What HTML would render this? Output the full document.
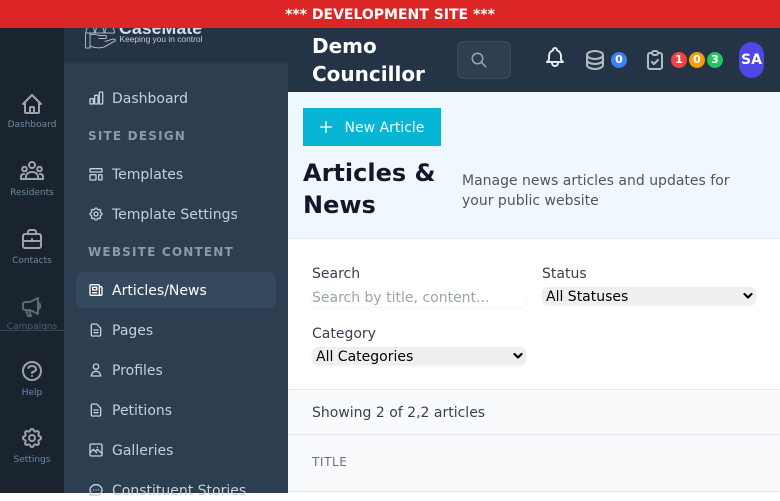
<!DOCTYPE html>
<html><head><meta charset="utf-8">
<style>
*{box-sizing:border-box;margin:0;padding:0}
html,body{width:780px;height:493px;overflow:hidden;background:#fff;font-family:"DejaVu Sans",sans-serif}
.a{position:absolute;white-space:nowrap}
svg{position:absolute;fill:none;stroke-linecap:round;stroke-linejoin:round}
.rl{position:absolute;left:0;width:64px;text-align:center;font-size:9px;line-height:12px;color:#6f87a1}
.ri{stroke:#9ca3af;stroke-width:2;width:24px;height:24px;left:20px}
.n{position:absolute;left:112px;font-size:14px;line-height:20px;color:#c6d0db;white-space:nowrap}
.ni{stroke:#c6d0db;stroke-width:2;width:16px;height:16px;left:88px}
.h{position:absolute;left:88px;font-size:12px;font-weight:700;letter-spacing:1.2px;color:#8a9aab;line-height:16px;white-space:nowrap}
.b{position:absolute;top:52px;width:16px;height:16px;border-radius:50%;color:#fff;font-size:11px;font-weight:700;line-height:16px;text-align:center}
.lab{position:absolute;font-size:14px;line-height:20px;color:#374151;white-space:nowrap}
.sel{position:absolute;height:18px;width:214px;background:#efefef;border-radius:6px;font-size:14px;line-height:20px;color:#000;padding-left:4px;box-shadow:0 1px 2px rgba(0,0,0,.05)}
.sel svg{right:3px;top:5px;width:10px;height:8px;stroke:#000;stroke-width:2.2}
</style></head><body>
<div class="a" style="left:0;top:28px;width:64px;height:465px;background:#1a242f"></div>
<div class="a" style="left:64px;top:28px;width:224px;height:465px;background:#2c3e50"></div>
<div class="a" style="left:64px;top:28px;width:224px;height:36px;background:#243345;border-bottom:1px solid #2a3a4c"></div>
<div class="a" style="left:288px;top:28px;width:492px;height:64px;background:#243345"></div>
<div class="a" style="left:288px;top:92px;width:492px;height:147px;background:#f0f8ff;border-bottom:1px solid #e5e7eb"></div>
<div class="a" style="left:288px;top:389px;width:492px;height:104px;background:#f9fafb"></div>
<div class="a" style="left:288px;top:389px;width:492px;height:1px;background:#e5e7eb"></div>
<div class="a" style="left:288px;top:434px;width:492px;height:1px;background:#e5e7eb"></div>
<div class="a" style="left:288px;top:491px;width:492px;height:1px;background:#e5e7eb"></div>

<!-- logo -->
<div class="a" style="left:119px;top:17px;font:700 17.800px/22px 'Liberation Sans',sans-serif;color:#d7dce2">CaseMate</div>
<div class="a" style="left:119.500px;top:33px;font:8.400px/12px 'Liberation Sans',sans-serif;color:#c4ccd5">Keeping you in control</div>
<svg style="left:85px;top:22px;width:32px;height:27px;stroke:#aeb6bf;stroke-width:1" viewBox="0 0 32 27"><path d="M.500 26V11h4.500v15zM5 13c4-1 6-1 9 .5h6c2 0 2 3 0 3h-6M5 24c6 2.500 10 2 14 1l11-6c1-1 0-2-2-2l-8 2.500M1 11c0-6 2.500-7 4.500-7s4 2 4 7zM10.500 11c0-6 2.500-7 4.500-7s4 2 4 7zM20 11c0-6 2.500-7 4.500-7s5 2 5 7z"/></svg>

<!-- banner -->
<div class="a" style="left:0;top:0;width:780px;height:28px;background:#dc2626;color:#fff;font-size:14px;font-weight:700;line-height:28px;text-align:center;padding-top:1px">*** DEVELOPMENT SITE ***</div>

<!-- rail -->
<svg class="ri" style="top:92px" viewBox="0 0 24 24"><path d="M3 12l2-2m0 0l7-7 7 7M5 10v10a1 1 0 001 1h3m10-11l2 2m-2-2v10a1 1 0 01-1 1h-3m-6 0a1 1 0 001-1v-4a1 1 0 011-1h2a1 1 0 011 1v4a1 1 0 001 1m-6 0h6"/></svg>
<div class="rl" style="top:119px">Dashboard</div>
<svg class="ri" style="top:160px" viewBox="0 0 24 24"><circle cx="12" cy="5" r="3"/><circle cx="4.500" cy="9" r="2.300"/><circle cx="19.500" cy="9" r="2.300"/><path d="M1 19v-2c0-2 1-3 3-3M23 19v-2c0-2-1-3-3-3M6 19v-2c0-3 2-5 6-5s6 2 6 5v2zM1 19h22"/></svg>
<div class="rl" style="top:187px">Residents</div>
<svg class="ri" style="top:227px" viewBox="0 0 24 24"><rect x="3" y="7" width="18" height="14" rx="2"/><path d="M8 7V5a2 2 0 012-2h4a2 2 0 012 2v2M3 14h18M12 12v.5"/></svg>
<div class="rl" style="top:255px">Contacts</div>
<svg class="ri" style="top:295px;stroke:#5d6873" viewBox="0 0 24 24"><path d="M3 9a2 2 0 012-2h5l8-4v16l-8-4H5a2 2 0 01-2-2zM6 15l2 6h3l-2-6M18 8c3 0 3 6 0 6"/></svg>
<div class="rl" style="top:321px;color:#4d5e70">Campaigns</div>
<div class="a" style="left:0;top:330px;width:64px;height:1px;background:#3a4754"></div>
<div class="a" style="left:0;top:331px;width:64px;height:10px;background:#1a242f"></div>
<svg class="ri" style="top:359px" viewBox="0 0 24 24"><path d="M8.228 9c.549-1.165 2.030-2 3.772-2 2.210 0 4 1.343 4 3 0 1.400-1.278 2.575-3.006 2.907-.542.104-.994.540-.994 1.093m0 3h.01M21 12a9 9 0 11-18 0 9 9 0 0118 0z"/></svg>
<div class="rl" style="top:387px;color:#6b8cb5">Help</div>
<svg class="ri" style="top:426px" viewBox="0 0 24 24"><path d="M10.325 4.317c.426-1.756 2.924-1.756 3.350 0a1.724 1.724 0 002.573 1.066c1.543-.940 3.310.826 2.370 2.370a1.724 1.724 0 001.065 2.572c1.756.426 1.756 2.924 0 3.350a1.724 1.724 0 00-1.066 2.573c.940 1.543-.826 3.310-2.370 2.370a1.724 1.724 0 00-2.572 1.065c-.426 1.756-2.924 1.756-3.350 0a1.724 1.724 0 00-2.573-1.066c-1.543.940-3.310-.826-2.370-2.370a1.724 1.724 0 00-1.065-2.572c-1.756-.426-1.756-2.924 0-3.350a1.724 1.724 0 001.066-2.573c-.940-1.543.826-3.310 2.370-2.370.996.608 2.296.070 2.572-1.065z"/><path d="M15 12a3 3 0 11-6 0 3 3 0 016 0z"/></svg>
<div class="rl" style="top:454px">Settings</div>

<!-- nav -->
<svg class="ni" style="top:90px" viewBox="0 0 24 24"><rect x="3" y="13" width="5" height="8" rx="1"/><rect x="10" y="8" width="5" height="13" rx="1"/><rect x="17" y="3" width="5" height="18" rx="1"/></svg>
<div class="n" style="top:89px">Dashboard</div>
<div class="h" style="top:128px">SITE DESIGN</div>
<svg class="ni" style="top:166px" viewBox="0 0 24 24"><rect x="3" y="4" width="18" height="5" rx="1"/><rect x="3" y="13" width="9" height="8" rx="1"/><rect x="16" y="13" width="5" height="8" rx="1"/></svg>
<div class="n" style="top:165px">Templates</div>
<svg class="ni" style="top:206px" viewBox="0 0 24 24"><path d="M10.325 4.317c.426-1.756 2.924-1.756 3.350 0a1.724 1.724 0 002.573 1.066c1.543-.940 3.310.826 2.370 2.370a1.724 1.724 0 001.065 2.572c1.756.426 1.756 2.924 0 3.350a1.724 1.724 0 00-1.066 2.573c.940 1.543-.826 3.310-2.370 2.370a1.724 1.724 0 00-2.572 1.065c-.426 1.756-2.924 1.756-3.350 0a1.724 1.724 0 00-2.573-1.066c-1.543.940-3.310-.826-2.370-2.370a1.724 1.724 0 00-1.065-2.572c-1.756-.426-1.756-2.924 0-3.350a1.724 1.724 0 001.066-2.573c-.940-1.543.826-3.310 2.370-2.370.996.608 2.296.070 2.572-1.065z"/><path d="M15 12a3 3 0 11-6 0 3 3 0 016 0z"/></svg>
<div class="n" style="top:205px">Template Settings</div>
<div class="h" style="top:244px">WEBSITE CONTENT</div>
<div class="a" style="left:76px;top:272px;width:200px;height:36px;background:#34495e;border-radius:6px"></div>
<svg class="ni" style="top:282px;stroke:#fff" viewBox="0 0 24 24"><path d="M19 20H5a2 2 0 01-2-2V6a2 2 0 012-2h10a2 2 0 012 2v1m2 13a2 2 0 01-2-2V7m2 13a2 2 0 002-2V9a2 2 0 00-2-2h-2m-4-3H9M7 16h6M7 8h6v4H7V8z"/></svg>
<div class="n" style="top:281px;color:#fff">Articles/News</div>
<svg class="ni" style="top:322px" viewBox="0 0 24 24"><path d="M9 12h6m-6 4h6m2 5H7a2 2 0 01-2-2V5a2 2 0 012-2h5.586a1 1 0 01.707.293l5.414 5.414a1 1 0 01.293.707V19a2 2 0 01-2 2z"/></svg>
<div class="n" style="top:321px">Pages</div>
<svg class="ni" style="top:362px" viewBox="0 0 24 24"><path d="M16 7a4 4 0 11-8 0 4 4 0 018 0zM12 14a7 7 0 00-7 7h14a7 7 0 00-7-7z"/></svg>
<div class="n" style="top:361px">Profiles</div>
<svg class="ni" style="top:402px" viewBox="0 0 24 24"><path d="M9 12h6m-6 4h6m2 5H7a2 2 0 01-2-2V5a2 2 0 012-2h5.586a1 1 0 01.707.293l5.414 5.414a1 1 0 01.293.707V19a2 2 0 01-2 2z"/></svg>
<div class="n" style="top:401px">Petitions</div>
<svg class="ni" style="top:442px" viewBox="0 0 24 24"><rect x="3" y="3" width="18" height="18" rx="2"/><path d="M3 16l5-5 5 5m-2-2l3-3 7 6M14 8h.01"/></svg>
<div class="n" style="top:441px">Galleries</div>
<svg class="ni" style="top:482px" viewBox="0 0 24 24"><path d="M8 12h.01M12 12h.01M16 12h.01M21 12c0 4.418-4.030 8-9 8a9.863 9.863 0 01-4.255-.949L3 20l1.395-3.720C3.512 15.042 3 13.574 3 12c0-4.418 4.030-8 9-8s9 3.582 9 8z"/></svg>
<div class="n" style="top:481px">Constituent Stories</div>

<!-- header -->
<div class="a" style="left:312px;top:32px;font-size:20px;font-weight:700;line-height:28px;color:#fff">Demo<br>Councillor</div>
<div class="a" style="left:457px;top:41px;width:54px;height:38px;background:#2f3f51;border:1px solid #3d4c5d;border-radius:6px"></div>
<svg style="left:470px;top:51px;width:18px;height:18px;stroke:#9ca3af;stroke-width:2" viewBox="0 0 24 24"><path d="M21 21l-6-6m2-5a7 7 0 11-14 0 7 7 0 0114 0z"/></svg>
<svg style="left:543px;top:45px;width:24px;height:24px;stroke:#e5e7eb;stroke-width:2" viewBox="0 0 24 24"><path d="M15 17h5l-1.405-1.405A2.032 2.032 0 0118 14.158V11a6.002 6.002 0 00-4-5.659V5a2 2 0 10-4 0v.341C7.670 6.165 6 8.388 6 11v3.159c0 .538-.214 1.055-.595 1.436L4 17h5m6 0v1a3 3 0 11-6 0v-1m6 0H9"/></svg>
<svg style="left:583px;top:48px;width:24px;height:24px;stroke:#b4bac2;stroke-width:2" viewBox="0 0 24 24"><path d="M4 7v10c0 2.210 3.582 4 8 4s8-1.790 8-4V7M4 7c0 2.210 3.582 4 8 4s8-1.790 8-4M4 7c0-2.210 3.582-4 8-4s8 1.790 8 4m0 5c0 2.210-3.582 4-8 4s-8-1.790-8-4"/></svg>
<div class="b" style="left:611px;background:#3b82f6">0</div>
<svg style="left:643px;top:48px;width:24px;height:24px;stroke:#b4bac2;stroke-width:2" viewBox="0 0 24 24"><path d="M9 5H7a2 2 0 00-2 2v12a2 2 0 002 2h10a2 2 0 002-2V7a2 2 0 00-2-2h-2M9 5a2 2 0 002 2h2a2 2 0 002-2M9 5a2 2 0 012-2h2a2 2 0 012 2m-6 9l2 2 4-4"/></svg>
<div class="b" style="left:671px;background:#ef4444">1</div>
<div class="b" style="left:689px;background:#f59e0b">0</div>
<div class="b" style="left:707px;background:#22c55e">3</div>
<div class="a" style="left:739px;top:42px;width:25px;height:36px;border-radius:13px;background:#4f46e5;color:#fff;font-size:14px;font-weight:700;line-height:36px;text-align:center">SA</div>

<!-- page header -->
<div class="a" style="left:303px;top:108px;width:138px;height:38px;background:#06b6d4"></div>
<svg style="left:318px;top:119px;width:16px;height:16px;stroke:#fff;stroke-width:2" viewBox="0 0 24 24"><path d="M12 4v16m8-8H4"/></svg>
<div class="a" style="left:344.500px;top:118px;font-size:14px;line-height:20px;color:#f0fdff">New Article</div>
<div class="a" style="left:303px;top:157px;font-size:24px;font-weight:700;line-height:32px;color:#111827">Articles &amp;<br>News</div>
<div class="a" style="left:462px;top:171px;font-size:14px;line-height:20px;color:#4b5563">Manage news articles and updates for<br>your public website</div>

<!-- filters -->
<div class="lab" style="left:312px;top:264px">Search</div>
<div class="a" style="left:312px;top:288px;width:214px;height:19px;border-radius:6px;font-size:14px;line-height:20px;color:#9ca3af;box-shadow:0 1px 2px rgba(0,0,0,.05)">Search by title, content...</div>
<div class="lab" style="left:542px;top:264px">Status</div>
<div class="sel" style="left:542px;top:287px">All Statuses<svg viewBox="0 0 10 8"><path d="M1.500 2l3.500 3.500L8.500 2"/></svg></div>
<div class="lab" style="left:312px;top:324px">Category</div>
<div class="sel" style="left:312px;top:347px">All Categories<svg viewBox="0 0 10 8"><path d="M1.500 2l3.500 3.500L8.500 2"/></svg></div>
<div class="lab" style="left:312px;top:403px">Showing 2 of 2,2 articles</div>
<div class="a" style="left:312px;top:454px;font-size:12px;line-height:16px;letter-spacing:.6px;color:#6b7280">TITLE</div>
</body></html>
